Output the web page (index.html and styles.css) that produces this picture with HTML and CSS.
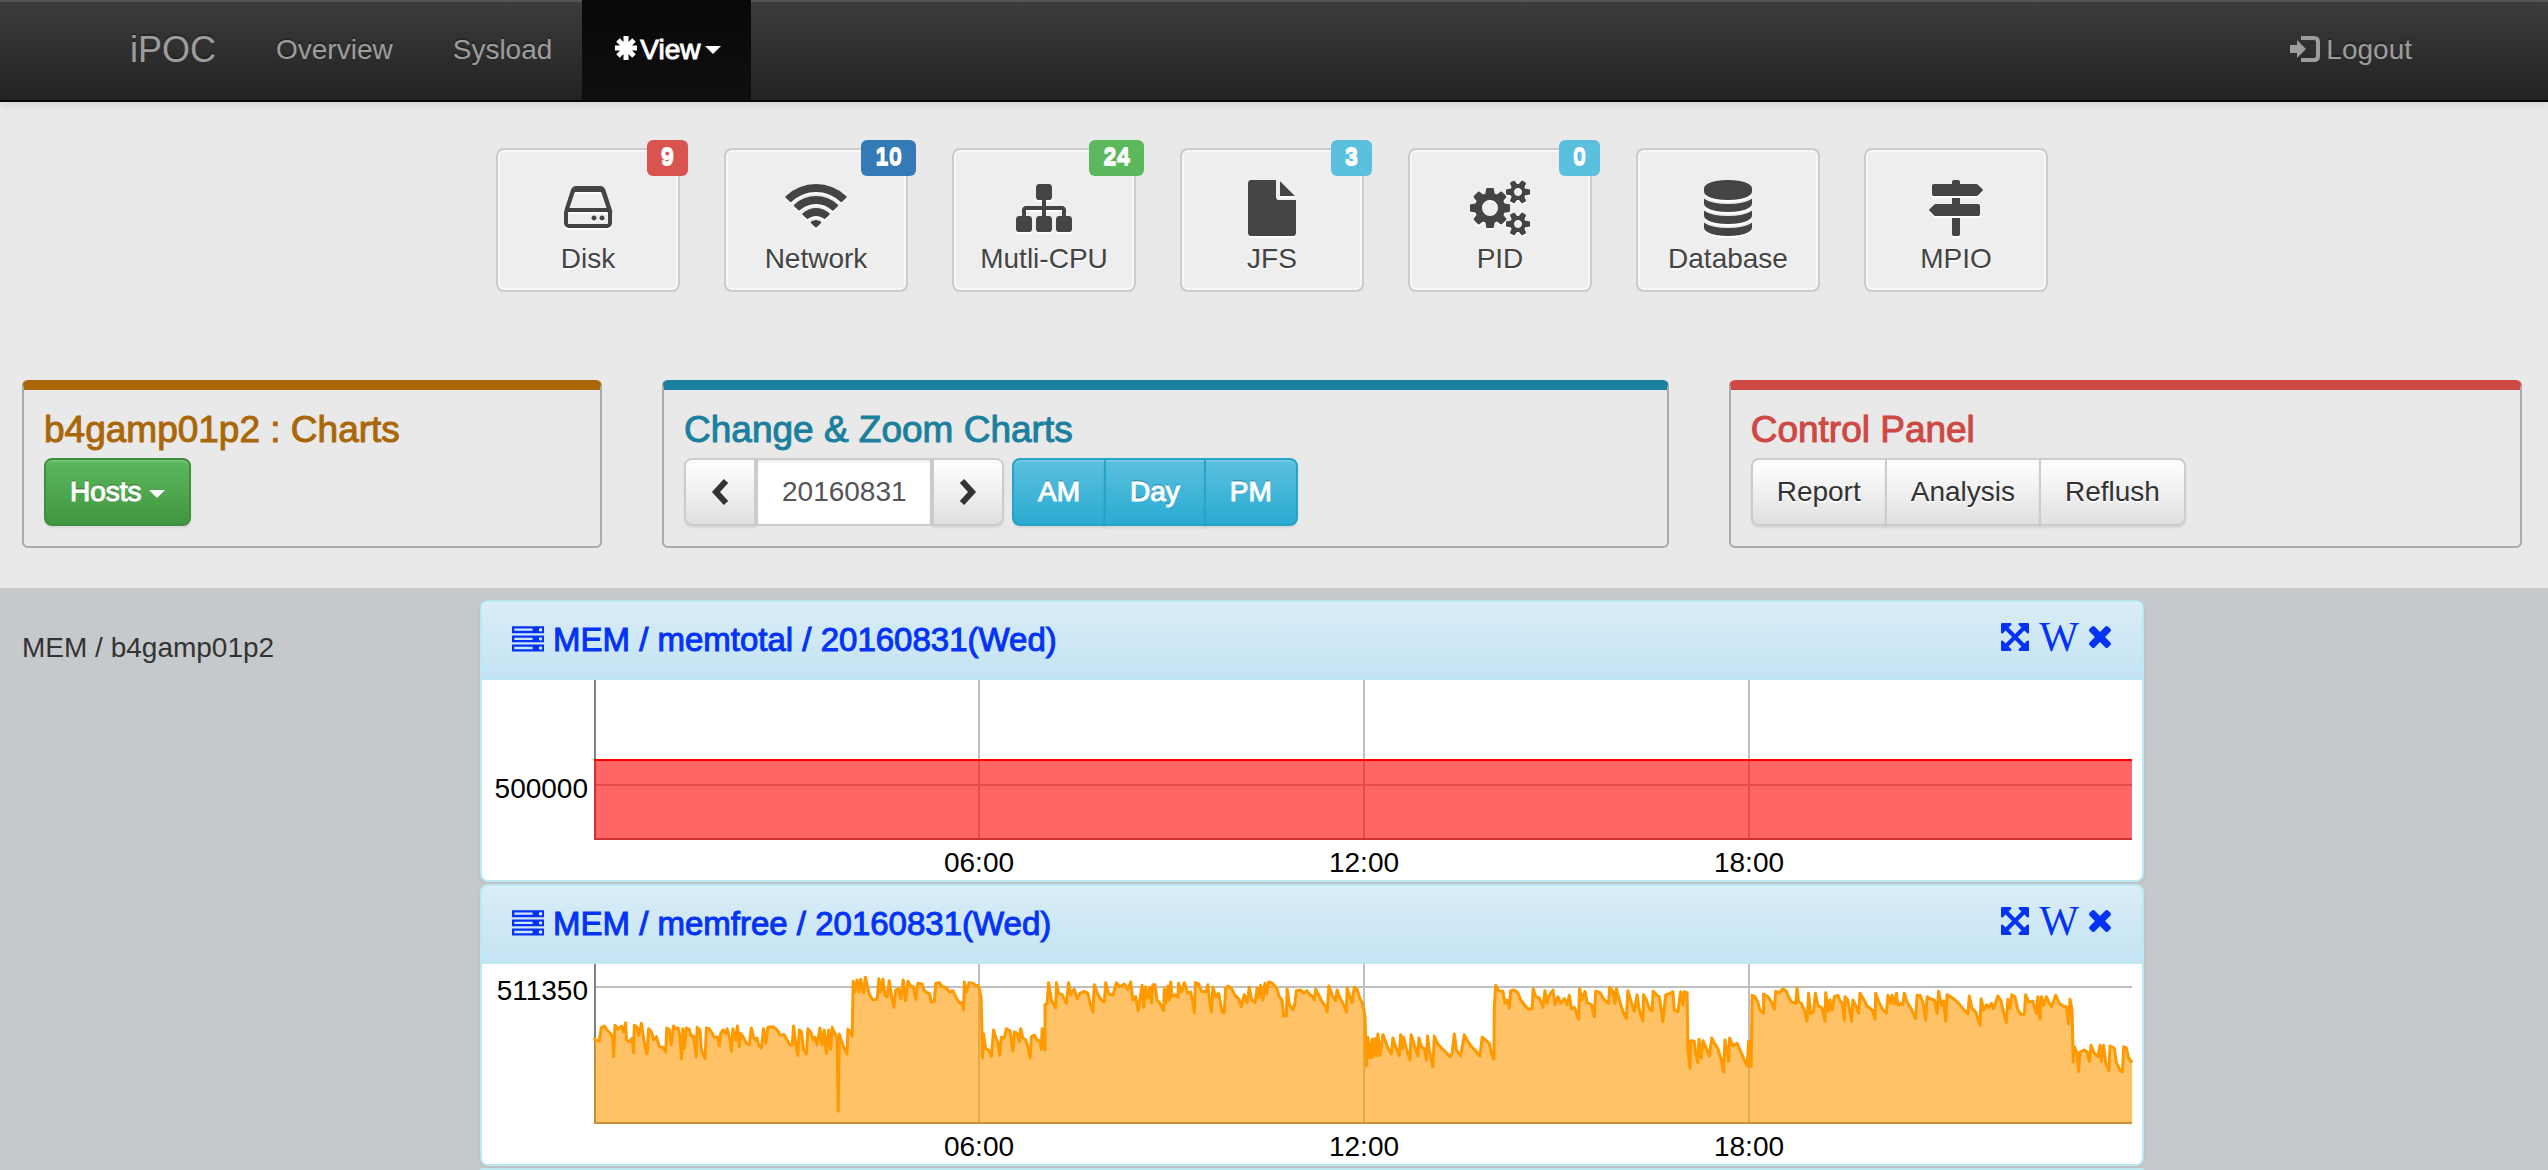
FILE: index.html
```html
<!DOCTYPE html>
<html lang="en">
<head>
<meta charset="utf-8">
<title>iPOC</title>
<link rel="stylesheet" href="styles.css">
</head>
<body>
<svg class="defs" aria-hidden="true">
  <symbol id="i-server" viewBox="0 0 1792 1792"><path d="M128 1408h1024v-128h-1024v128zm0-512h1024v-128h-1024v128zm1568 448q0-40-28-68t-68-28-68 28-28 68 28 68 68 28 68-28 28-68zm-1568-960h1024v-128h-1024v128zm1568 448q0-40-28-68t-68-28-68 28-28 68 28 68 68 28 68-28 28-68zm0-512q0-40-28-68t-68-28-68 28-28 68 28 68 68 28 68-28 28-68zm96 832v384h-1792v-384h1792zm0-512v384h-1792v-384h1792zm0-512v384h-1792v-384h1792z"/></symbol>
  <symbol id="i-expand" viewBox="128 128 1536 1536"><path d="M1411 541l-355 355 355 355 144-144q29-31 70-14 39 17 39 59v448q0 26-19 45t-45 19h-448q-42 0-59-40-17-39 14-69l144-144-355-355-355 355 144 144q31 30 14 69-17 40-59 40h-448q-26 0-45-19t-19-45v-448q0-42 40-59 39-17 69 14l144 144 355-355-355-355-144 144q-19 19-45 19-12 0-24-5-40-17-40-59v-448q0-26 19-45t45-19h448q42 0 59 40 17 39-14 69l-144 144 355 355 355-355-144-144q-31-30-14-69 17-40 59-40h448q26 0 45 19t19 45v448q0 42-39 59-13 5-25 5-26 0-45-19z"/></symbol>
  <symbol id="i-close" viewBox="302 366 1188 1188"><path d="M1490 1322q0 40-28 68l-136 136q-28 28-68 28t-68-28l-294-294-294 294q-28 28-68 28t-68-28l-136-136q-28-28-28-68t28-68l294-294-294-294q-28-28-28-68t28-68l136-136q28-28 68-28t68 28l294 294 294-294q28-28 68-28t68 28l136 136q28 28 28 68t-28 68l-294 294 294 294q28 28 28 68z"/></symbol>
</svg>

<nav class="navbar">
  <div class="navbar-inner">
    <a class="brand" href="#">iPOC</a>
    <a class="nav-link" href="#">Overview</a>
    <a class="nav-link" href="#">Sysload</a>
    <a class="nav-link active" href="#"><svg class="asterisk" viewBox="0 0 28 28"><path d="M14 2v24M3 14h22M6 6l16 16M22 6L6 22" stroke="currentColor" stroke-width="5" fill="none"/></svg>View<span class="caret"></span></a>
    <a class="nav-link logout" href="#"><svg class="login" viewBox="0 0 32 28"><path d="M1 10h7V5l9 9-9 9v-5H1z" fill="currentColor"/><path d="M12 3h13q4 0 4 4v14q0 4-4 4H12" fill="none" stroke="currentColor" stroke-width="4"/></svg>Logout</a>
  </div>
</nav>

<div class="apps">
  <button class="app" type="button"><span class="badge red">9</span><svg viewBox="0 0 1792 1792"><path d="M1168 1216q0 33-23.5 56.5t-56.5 23.5-56.5-23.5-23.5-56.5 23.5-56.5 56.5-23.5 56.5 23.5 23.5 56.5zm256 0q0 33-23.5 56.5t-56.5 23.5-56.5-23.5-23.5-56.5 23.5-56.5 56.5-23.5 56.5 23.5 23.5 56.5zm112 160v-320q0-13-9.5-22.5t-22.5-9.5h-1216q-13 0-22.5 9.5t-9.5 22.5v320q0 13 9.5 22.5t22.5 9.5h1216q13 0 22.5-9.5t9.5-22.5zm-1230-480h1180l-157-482q-4-13-16-21.5t-26-8.5h-782q-14 0-26 8.5t-16 21.5zm1358 160v320q0 66-47 113t-113 47h-1216q-66 0-113-47t-47-113v-320q0-49 30-145l197-606q16-50 60-82t96-32h782q52 0 96 32t60 82l197 606q30 96 30 145z"/></svg>Disk</button>
  <button class="app" type="button"><span class="badge blue">10</span><svg viewBox="0 0 2048 1792"><path d="M1024 1523q-20 0-93-73.5t-73-93.5q0-32 62.5-54t103.5-22 103.5 22 62.5 54q0 20-73 93.5t-93 73.5zm270-271q-2 0-40-25t-101.5-50-128.5-25-128.5 25-101 50-40.500 25q-18 0-93.500-75t-75.500-93q0-13 10-23 78-77 196-121t233-44 233 44 196 121q10 10 10 23 0 18-75.500 93t-93.500 75zm273-272q-11 0-23-8-136-105-252-154.500t-268-49.500q-85 0-170.500 22t-149 53-113.500 62-79 53-31 22q-17 0-92-75t-75-93q0-12 10-22 132-132 320-205t380-73 380 73 320 205q10 10 10 22 0 18-75 93t-92 75zm271-271q-11 0-22-9-179-157-371.500-236.500t-420.500-79.500-420.500 79.500-371.500 236.500q-11 9-22 9-17 0-92.500-75t-75.500-93q0-13 10-23 187-186 445-288t527-102 527 102 445 288q10 10 10 23 0 18-75.500 93t-92.500 75z"/></svg>Network</button>
  <button class="app" type="button"><span class="badge green">24</span><svg viewBox="0 0 1792 1792"><path d="M1792 1248v320q0 40-28 68t-68 28h-320q-40 0-68-28t-28-68v-320q0-40 28-68t68-28h96v-192h-512v192h96q40 0 68 28t28 68v320q0 40-28 68t-68 28h-320q-40 0-68-28t-28-68v-320q0-40 28-68t68-28h96v-192h-512v192h96q40 0 68 28t28 68v320q0 40-28 68t-68 28h-320q-40 0-68-28t-28-68v-320q0-40 28-68t68-28h96v-192q0-52 38-90t90-38h512v-192h-96q-40 0-68-28t-28-68v-320q0-40 28-68t68-28h320q40 0 68 28t28 68v320q0 40-28 68t-68 28h-96v192h512q52 0 90 38t38 90v192h96q40 0 68 28t28 68z"/></svg>Mutli-CPU</button>
  <button class="app" type="button"><span class="badge cyan">3</span><svg viewBox="0 0 1792 1792"><path d="M1152 512v-472q22 14 36 28l408 408q14 14 28 36h-472zm-128 32q0 40 28 68t68 28h544v1056q0 40-28 68t-68 28h-1344q-40 0-68-28t-28-68v-1600q0-40 28-68t68-28h800v544z"/></svg>JFS</button>
  <button class="app" type="button"><span class="badge cyan">0</span><svg viewBox="0 0 1920 1792"><path d="M896 896q0-106-75-181t-181-75-181 75-75 181 75 181 181 75 181-75 75-181zm768 512q0-52-38-90t-90-38-90 38-38 90q0 53 37.500 90.500t90.500 37.500 90.500-37.500 37.500-90.500zm0-1024q0-52-38-90t-90-38-90 38-38 90q0 53 37.500 90.500t90.500 37.500 90.500-37.500 37.500-90.500zm-384 421v185q0 10-7 19.500t-16 10.500l-155 24q-11 35-32 76 34 48 90 115 7 11 7 20 0 12-7 19-23 30-82.500 89.500t-78.500 59.500q-11 0-21-7l-115-90q-37 19-77 31-11 108-23 155-7 24-30 24h-186q-11 0-20-7.500t-10-17.500l-23-153q-34-10-75-31l-118 89q-7 7-20 7-11 0-21-8-144-133-144-160 0-9 7-19 10-14 41-53t47-61q-23-44-35-82l-152-24q-10-1-17-9.500t-7-19.500v-185q0-10 7-19.500t16-10.500l155-24q11-35 32-76-34-48-90-115-7-11-7-20 0-12 7-20 22-30 82-89t79-59q11 0 21 7l115 90q34-18 77-32 11-108 23-154 7-24 30-24h186q11 0 20 7.500t10 17.500l23 153q34 10 75 31l118-89q8-7 20-7 11 0 21 8 144 133 144 160 0 8-7 19-12 16-42 54t-45 60q23 48 34 82l152 23q10 2 17 10.500t7 19.500zm640 533v140q0 16-149 31-12 27-30 52 51 113 51 138 0 4-4 7-122 71-124 71-8 0-46-47t-52-68q-20 2-30 2t-30-2q-14 21-52 68t-46 47q-2 0-124-71-4-3-4-7 0-25 51-138-18-25-30-52-149-15-149-31v-140q0-16 149-31 13-29 30-52-51-113-51-138 0-4 4-7 4-2 35-20t59-34 30-16q8 0 46 46.500t52 67.500q20-2 30-2t30 2q51-71 92-112l6-2q4 0 124 70 4 3 4 7 0 25-51 138 17 23 30 52 149 15 149 31zm0-1024v140q0 16-149 31-12 27-30 52 51 113 51 138 0 4-4 7-122 71-124 71-8 0-46-47t-52-68q-20 2-30 2t-30-2q-14 21-52 68t-46 47q-2 0-124-71-4-3-4-7 0-25 51-138-18-25-30-52-149-15-149-31v-140q0-16 149-31 13-29 30-52-51-113-51-138 0-4 4-7 4-2 35-20t59-34 30-16q8 0 46 46.500t52 67.500q20-2 30-2t30 2q51-71 92-112l6-2q4 0 124 70 4 3 4 7 0 25-51 138 17 23 30 52 149 15 149 31z"/></svg>PID</button>
  <button class="app" type="button"><svg viewBox="0 0 1792 1792"><path d="M896 768q237 0 443-43t325-127v170q0 69-103 128t-280 93.500-385 34.500-385-34.500-280-93.500-103-128v-170q119 84 325 127t443 43zm0 768q237 0 443-43t325-127v170q0 69-103 128t-280 93.500-385 34.500-385-34.500-280-93.500-103-128v-170q119 84 325 127t443 43zm0-384q237 0 443-43t325-127v170q0 69-103 128t-280 93.500-385 34.500-385-34.500-280-93.500-103-128v-170q119 84 325 127t443 43zm0-1152q208 0 385 34.500t280 93.500 103 128v128q0 69-103 128t-280 93.500-385 34.500-385-34.500-280-93.500-103-128v-128q0-69 103-128t280-93.500 385-34.500z"/></svg>Database</button>
  <button class="app" type="button"><svg viewBox="0 0 1792 1792"><path d="M1745 297q10 10 10 23t-10 23l-141 141q-28 28-68 28h-1344q-26 0-45-19t-19-45v-256q0-26 19-45t45-19h576v-64q0-26 19-45t45-19h128q26 0 45 19t19 45v64h512q40 0 68 28zm-977 919h256v512q0 26-19 45t-45 19h-128q-26 0-45-19t-19-45v-512zm832-448q26 0 45 19t19 45v256q0 26-19 45t-45 19h-1344q-40 0-68-28l-141-141q-10-10-10-23t10-23l141-141q28-28 68-28h512v-192h256v192h576z"/></svg>MPIO</button>
</div>

<div class="callouts">
  <section class="callout hosts">
    <h2>b4gamp01p2 : Charts</h2>
    <button class="btn success" type="button">Hosts <span class="caret"></span></button>
  </section>
  <section class="callout zoom">
    <h2>Change &amp; Zoom Charts</h2>
    <div class="toolbar">
      <div class="date-group">
        <button class="btn default" type="button" aria-label="Previous day"><svg class="chevron" viewBox="0 0 20 28"><path d="M16 3L6 14l10 11" fill="none" stroke="currentColor" stroke-width="6"/></svg></button>
        <input class="date" type="text" value="20160831" aria-label="Date">
        <button class="btn default" type="button" aria-label="Next day"><svg class="chevron" viewBox="0 0 20 28"><path d="M4 3l10 11L4 25" fill="none" stroke="currentColor" stroke-width="6"/></svg></button>
      </div>
      <div class="btn-group">
        <button class="btn info" type="button">AM</button>
        <button class="btn info" type="button">Day</button>
        <button class="btn info" type="button">PM</button>
      </div>
    </div>
  </section>
  <section class="callout control">
    <h2>Control Panel</h2>
    <div class="btn-group">
      <button class="btn default" type="button">Report</button>
      <button class="btn default" type="button">Analysis</button>
      <button class="btn default" type="button">Reflush</button>
    </div>
  </section>
</div>

<main class="charts">
  <div class="host-label">MEM / b4gamp01p2</div>
  <div class="panels">
    <article class="panel">
      <header class="panel-head">
        <h3><svg class="server"><use href="#i-server"/></svg>MEM / memtotal / 20160831(Wed)</h3>
        <div class="tools">
          <a href="#" aria-label="Expand"><svg class="expand"><use href="#i-expand"/></svg></a>
          <a class="wiki" href="#">W</a>
          <a href="#" aria-label="Close"><svg class="close"><use href="#i-close"/></svg></a>
        </div>
      </header>
      <svg class="chart" viewBox="0 0 1660 200">
        <path class="grid" d="M497 0v160M882 0v160M1267 0v160M114 105h1536"/>
        <path class="axis" d="M113 0v159h1537"/>
        <path class="fill red" d="M112 80h1538v80H112z"/>
        <path class="line red" d="M112 80h1538"/>
        <text class="ylabel" x="106" y="118">500000</text>
        <text x="497" y="192">06:00</text>
        <text x="882" y="192">12:00</text>
        <text x="1267" y="192">18:00</text>
      </svg>
    </article>
    <article class="panel">
      <header class="panel-head">
        <h3><svg class="server"><use href="#i-server"/></svg>MEM / memfree / 20160831(Wed)</h3>
        <div class="tools">
          <a href="#" aria-label="Expand"><svg class="expand"><use href="#i-expand"/></svg></a>
          <a class="wiki" href="#">W</a>
          <a href="#" aria-label="Close"><svg class="close"><use href="#i-close"/></svg></a>
        </div>
      </header>
      <svg class="chart" viewBox="0 0 1660 200">
        <path class="grid" d="M497 0v160M882 0v160M1267 0v160M114 23h1536"/>
        <path class="axis" d="M113 0v159h1537"/>
        <path class="fill orange" id="memfree-fill"/>
        <path class="line orange" id="memfree-line"/>
        <text class="ylabel" x="106" y="36">511350</text>
        <text x="497" y="192">06:00</text>
        <text x="882" y="192">12:00</text>
        <text x="1267" y="192">18:00</text>
      </svg>
    </article>
    <article class="panel"></article>
  </div>
</main>
<script src="memfree.js"></script>
</body>
</html>
```
FILE: styles.css
```css
* { box-sizing: border-box; }

body {
  margin: 0;
  height: 100vh;
  display: flex;
  flex-direction: column;
  overflow: hidden;
  background: #e9e9e9;
  color: #333;
  font: 28px/40px "Liberation Sans", Arial, sans-serif;
}

button, input { font: inherit; margin: 0; }
a { text-decoration: none; color: inherit; }
svg { fill: currentColor; }
.defs { display: none; }

.caret {
  display: inline-block;
  margin-left: 4px;
  vertical-align: middle;
  border: 8px solid transparent;
  border-top-color: currentColor;
  border-bottom: 0;
}
.btn .caret { margin-left: 0; }

/* Navigation bar */
.navbar {
  flex: none;
  background: linear-gradient(#3c3c3c, #222);
  border-bottom: 2px solid #080808;
  box-shadow: inset 0 2px 0 #555, 0 2px 10px rgba(0, 0, 0, .1);
  color: #9d9d9d;
  text-shadow: 0 -2px 0 rgba(0, 0, 0, .25);
}
.navbar-inner {
  display: flex;
  max-width: 2344px;
  margin: 0 auto;
}
.brand {
  padding: 30px 30px 30px 28px;
  font-size: 36px;
}
.nav-link {
  display: flex;
  align-items: center;
  padding: 30px;
}
.nav-link.active {
  background: linear-gradient(#080808, #0f0f0f);
  color: #fff;
  -webkit-text-stroke: 1px currentColor;
}
.logout { margin-left: auto; padding-right: 34px; }
.asterisk { width: 28px; height: 28px; margin-top: -4px; }
.login { width: 32px; height: 28px; margin-right: 5px; margin-top: -2px; }

/* Resource shortcuts */
.apps {
  flex: none;
  display: flex;
  justify-content: center;
  gap: 44px;
  padding: 46px 4px 88px 0;
}
.app {
  position: relative;
  width: 184px;
  padding: 30px 0 11px;
  border: 2px solid #ccc;
  border-radius: 8px;
  background: #eee;
  box-shadow: inset 0 0 0 2px #f8f8f8;
  color: #444;
  text-shadow: 0 2px 0 #fff;
}
.app svg {
  display: block;
  height: 56px;
  margin: 0 auto 3px;
  filter: drop-shadow(0 2px 0 #fff);
}
.badge {
  position: absolute;
  top: -10px;
  right: -10px;
  padding: 0 14px 4px;
  border-radius: 6px;
  color: #fff;
  font-size: 24px;
  font-weight: bold;
  line-height: 32px;
}
.badge.red { background: #d9534f; }
.badge.blue { background: #337ab7; }
.badge.green { background: #5cb85c; }
.badge.cyan { background: #5bc0de; }

/* Callout boxes */
.callouts {
  flex: none;
  display: grid;
  grid-template-columns: repeat(12, 1fr);
  gap: 60px;
  padding: 0 26px 40px 22px;
}
.callout {
  padding: 20px;
  border: 2px solid #aaa;
  border-top: 10px solid;
  border-radius: 6px;
}
.callout h2 {
  margin: 0 0 8px;
  font-size: 37px;
  font-weight: normal;
  line-height: 40px;
  -webkit-text-stroke: 1px currentColor;
}
.callout.hosts { grid-column: span 3; border-top-color: #aa6708; }
.callout.zoom { grid-column: span 5; border-top-color: #1b809e; }
.callout.control { grid-column: span 4; border-top-color: #ce4844; }
.hosts h2 { color: #aa6708; }
.zoom h2 { color: #1b809e; }
.control h2 { color: #ce4844; }

.toolbar { display: flex; gap: 8px; }
.date-group, .btn-group { display: flex; }

.btn {
  display: block;
  height: 68px;
  padding: 12px 24px;
  border: 2px solid;
  border-radius: 8px;
}
.btn.success {
  border-color: #3e8f3e;
  background: linear-gradient(#5cb85c, #419641);
}
.btn.info {
  border-color: #28a4c9;
  background: linear-gradient(#5bc0de, #2aabd2);
}
.btn.success, .btn.info {
  color: #fff;
  text-shadow: 0 -2px 0 rgba(0, 0, 0, .2);
  box-shadow: inset 0 2px 0 rgba(255, 255, 255, .15), 0 2px 2px rgba(0, 0, 0, .075);
  -webkit-text-stroke: 1px currentColor;
}
.btn.default {
  border-color: #ccc;
  background: linear-gradient(#fff, #e0e0e0);
  color: #333;
  text-shadow: 0 2px 0 #fff;
  box-shadow: 0 2px 2px rgba(0, 0, 0, .075);
}
.btn-group .btn + .btn { margin-left: -2px; }
.btn:not(:last-child) { border-top-right-radius: 0; border-bottom-right-radius: 0; }
.btn:not(:first-child):not(.success) { border-top-left-radius: 0; border-bottom-left-radius: 0; }
.chevron { display: block; width: 20px; height: 28px; }
.date {
  width: 176px;
  padding: 12px 24px;
  border: 2px solid #ccc;
  border-radius: 0;
  background: #fff;
  box-shadow: inset 0 2px 2px rgba(0, 0, 0, .075);
  color: #555;
}

/* Chart list */
.charts {
  flex: 1;
  min-height: 0;
  overflow: hidden;
  display: grid;
  grid-template-columns: 458fr 1664fr 404fr;
  padding: 12px 0 0 22px;
  background: #c6c9cc;
}
.host-label { padding-top: 28px; }
.panels { display: flex; flex-direction: column; gap: 2px; }
.panel {
  flex: none;
  overflow: hidden;
  border: 2px solid #bce8f1;
  border-radius: 8px;
  background: #fff;
  box-shadow: 0 2px 4px rgba(0, 0, 0, .05);
}
.panel-head {
  display: flex;
  justify-content: space-between;
  align-items: center;
  padding: 20px 31px 20px 30px;
  border-bottom: 2px solid #bce8f1;
  background: linear-gradient(#d9edf7, #c4e3f3);
  color: #0433f5;
}
.panel-head h3 {
  display: flex;
  align-items: center;
  gap: 9px;
  margin: 0;
  font-size: 33px;
  font-weight: normal;
  line-height: 36px;
  -webkit-text-stroke: 1px currentColor;
}
.server { width: 32px; height: 32px; }
.tools {
  display: flex;
  align-items: center;
  gap: 10px;
  padding-bottom: 6px;
}
.tools svg { display: block; }
.expand { width: 28px; height: 28px; }
.close { width: 22px; height: 22px; }
.wiki { font: 42px/28px "Liberation Serif", "Times New Roman", serif; }

.chart { display: block; width: 100%; height: auto; }
.chart text { fill: #000; font-size: 28px; text-anchor: middle; }
.chart .ylabel { text-anchor: end; }
.grid { fill: none; stroke: #bfbfbf; stroke-width: 2; }
.axis { fill: none; stroke: #7f7f7f; stroke-width: 2; }
.line { fill: none; stroke-width: 2; stroke-linejoin: round; }
.fill.red { fill: #f00; fill-opacity: .6; }
.line.red { stroke: #f00; }
.fill.orange { fill: #f90; fill-opacity: .6; }
.line.orange { stroke: #f90; stroke-width: 3; }
```
FILE: memfree.js
```js
// Free memory samples for the day, in three runs: "time,depth" pairs.
// A run's time and depth are relative to its own start.
const runs = [
  { time: 0, depth: 0, samples: "40,262 44,272 54,272 60,232 68,228 76,240 86,252 92,265 94,320 98,226 106,238 116,228 122,245 128,218 130,270 138,275 146,265 150,308 152,226 160,232 164,256 172,220 176,250 182,290 188,312 192,236 200,246 206,270 214,260 222,290 232,292 240,306 243,234 250,240 255,284 262,228 268,236 275,234 280,262 284,326 288,236 292,296 298,234 306,238 310,256 318,258 325,320 328,232 336,240 340,300 350,326 354,234 362,236 370,250 376,262 386,262 390,288 394,250 400,240 408,250 412,236 420,268 424,304 428,236 436,270 441,228 446,290 450,250 458,262 466,280 474,285 480,234 486,262 492,270 496,264 500,285 508,294 514,236 520,280 526,232 540,230 552,240 560,254 572,254 580,270 588,286 594,286 598,228 604,280 610,316 614,240 620,245 626,300 634,312 638,236 648,250 652,270 658,262 664,285 672,234 678,285 684,240 690,310 696,240 702,298 706,232 714,250 720,265 723,484 726,252 732,272 738,290 748,312 750,238 758,245 762,258 765,94 770,126 776,90 782,126 786,88 794,128 799,82 804,104 810,134 820,150 832,148 837,86 842,126 848,88 854,136 860,140 866,92 872,136 879,172 884,120 892,116 898,146 905,90 912,152 918,94 926,108 934,110 940,148 946,100 958,102 964,122 972,128 978,130 984,156 992,154 996,100 1006,98 1014,110 1024,112 1034,126 1044,122 1052,140 1062,158 1070,158 1074,180 1076,96 1082,126 1090,98 1100,100 1108,106 1116,108 1123,140 1127,324 1130,252 1136,296 1144,300 1152,320 1158,240 1164,262 1170,278 1175,316 1180,262 1188,264 1194,236 1204,242 1212,304 1216,246 1224,250 1230,276 1234,236 1240,264 1248,270 1254,290 1260,324 1264,260 1272,255 1280,270 1288,272 1292,298 1294,236 1302,300 1302,164 1308,160 1312,98 1320,150 1332,174 1334,98 1340,130 1350,134 1362,160 1368,98 1374,134 1384,118 1392,146 1400,130 1412,124 1422,130 1428,160 1436,186 1440,104 1450,134 1460,150 1468,156 1472,98 1480,132 1492,136 1502,98 1512,110 1524,102 1534,118 1542,96 1548,150 1556,140 1563,182" },
  { time: 1456, depth: 0, samples: "118,106 122,172 128,110 134,145 140,112 144,158 148,104 154,104 160,150 168,160 178,182 180,116 184,160 190,108 194,150 198,96 202,140 210,134 218,142 220,100 228,126 236,98 246,130 254,126 260,160 264,188 267,98 276,102 284,124 296,126 302,104 306,146 312,186 316,112 324,140 332,130 342,186 348,188 352,114 360,108 370,118 378,136 388,146 396,170 404,134 412,158 418,112 424,148 434,158 440,114 444,144 450,106 456,150 462,100 466,132 472,96 480,98 490,108 496,118 502,140 510,150 514,198 522,198 524,116 530,164 540,180 546,160 550,122 562,120 570,130 580,122 586,132 596,140 600,150 604,118 612,134 622,156 632,170 636,186 641,108 650,136 660,152 664,120 672,144 680,160 690,186 692,114 700,140 706,158 712,112 720,118 728,146 736,164 742,200 746,348 750,262 756,324 762,268 764,322 770,266 774,318 778,252 784,316 792,254 798,270 806,294 816,312 820,264 828,290 838,316 842,254 846,296 850,262 858,296 868,330 871,254 880,284 890,318 893,264 900,290 908,296 914,330 917,258 922,300 932,350 936,258 946,282 958,296 968,306 980,320 986,310 992,252 998,300 1010,318 1020,254 1028,270 1040,290 1052,302 1064,318 1070,262 1080,270 1090,280 1096,310 1103,328 1104,170 1108,106 1116,122 1128,124 1134,160 1140,150 1146,174 1150,122 1160,120 1170,128 1178,150 1188,164 1200,178 1210,176 1213,116 1220,140 1230,144 1240,172 1246,122 1252,160 1258,136 1268,120 1274,164 1282,140 1290,160 1300,146 1308,164 1314,136 1320,176 1328,172 1340,208 1343,116 1350,150 1358,124 1364,158 1376,164 1384,200 1388,124 1400,128 1412,150 1424,160 1427,112 1436,124 1442,160 1446,116 1454,150 1464,184 1474,206 1478,122 1488,158 1496,184 1504,134 1510,180 1520,212 1522,134 1530,150 1540,180 1546,182 1549,124 1560,136" },
  { time: 2912, depth: -210, samples: "110,350 120,425 128,345 140,340 148,335 152,390 162,395 170,335 176,375 180,335 188,338 190,510 196,565 198,482 208,484 212,520 218,548 221,478 228,534 232,482 240,500 250,528 257,474 264,490 274,506 284,540 290,576 294,480 304,544 307,474 316,498 328,490 338,514 348,540 356,558 360,484 367,560 370,346 378,350 386,368 392,390 402,400 402,342 414,350 424,366 432,388 436,334 446,338 456,326 466,334 472,350 480,366 492,370 496,324 500,366 508,370 516,390 524,424 528,340 534,402 542,394 547,340 554,376 566,384 574,424 576,338 584,394 588,360 594,390 600,350 610,346 616,362 622,370 628,420 630,350 638,360 648,424 652,360 658,372 668,400 672,340 682,358 692,378 706,390 714,418 716,340 724,364 734,386 746,400 750,346 758,370 762,346 768,372 774,340 778,376 786,370 792,374 796,340 804,366 814,384 828,416 832,346 840,346 848,366 856,420 860,350 868,356 880,360 888,400 892,334 900,376 906,362 912,424 916,344 926,350 938,360 948,370 960,386 974,402 978,348 986,386 996,396 1008,436 1011,356 1018,390 1026,374 1032,384 1040,370 1046,386 1058,348 1066,360 1074,396 1082,428 1086,358 1092,384 1097,344 1106,350 1114,390 1124,404 1132,402 1136,344 1144,366 1156,364 1166,400 1170,350 1176,418 1180,350 1186,376 1194,350 1202,370 1208,380 1214,364 1220,346 1230,370 1240,378 1250,380 1256,432 1260,358 1266,390 1269,546 1272,500 1280,520 1284,574 1288,516 1300,510 1308,516 1314,544 1319,496 1328,520 1338,530 1344,496 1348,544 1354,496 1360,548 1369,572 1372,498 1384,504 1390,548 1400,570 1407,576 1410,500 1418,504 1424,534 1434,548" }
];

const points = runs.flatMap(run => run.samples.split(" ").map(pair => {
  const [t, d] = pair.split(",").map(Number);
  return [((t + run.time) / 2.8 + 98).toFixed(1), ((d + run.depth) / 3 - 14).toFixed(1)];
}));
const line = "M" + points.map(p => p.join(" ")).join("L");
document.getElementById("memfree-line").setAttribute("d", line);
document.getElementById("memfree-fill").setAttribute("d", line + "V160H112Z");
```
